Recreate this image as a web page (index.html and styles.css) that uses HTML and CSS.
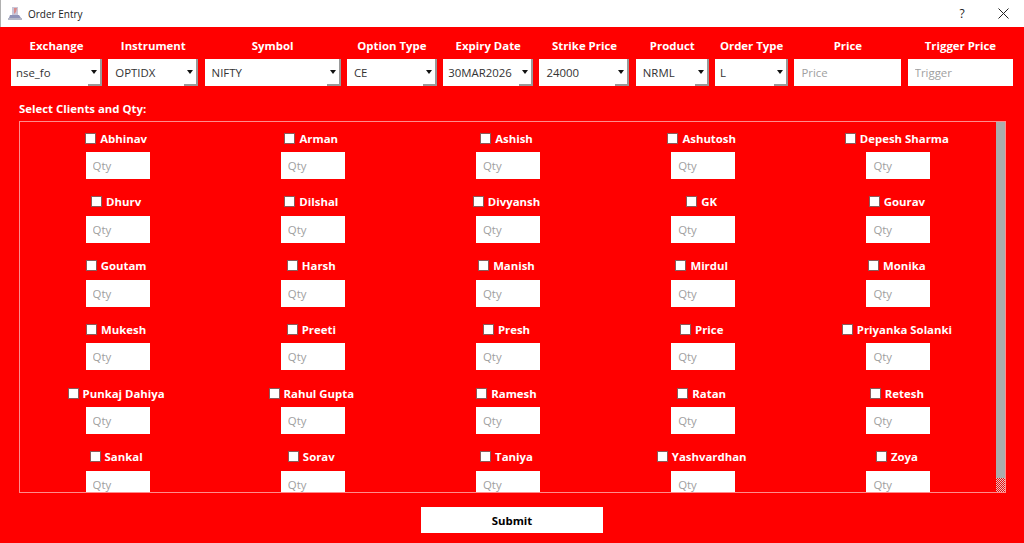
FILE: index.html
```html
<!DOCTYPE html>
<html lang="en">
<head>
    <meta charset="UTF-8">
    <meta name="viewport" content="width=device-width, initial-scale=1.0">
    <title>Order Entry</title>
    <link rel="stylesheet" href="styles.css">
</head>
<body>
    <!-- Window title bar -->
    <div class="title-bar">
        <svg class="app-icon" width="15" height="15" viewBox="0 0 15 15">
            <rect x="4" y="1" width="6" height="8" fill="#c9c6d8"/>
            <path d="M6 2 L9 2 L8 6 L6 8 Z" fill="#d98a8a"/>
            <path d="M2 9 L11 9 L13 12 L1 12 Z" fill="#8f93b8"/>
            <rect x="0" y="12" width="14" height="2" fill="#b4b8c8"/>
        </svg>
        <span class="title-text">Order Entry</span>
        <span class="help-button">?</span>
        <svg class="close-button" width="11" height="11" viewBox="0 0 11 11">
            <path d="M0.5 0.5 L10.5 10.5 M10.5 0.5 L0.5 10.5" stroke="#222" stroke-width="1" fill="none"/>
        </svg>
    </div>

    <div class="main">
        <!-- Order fields -->
        <div class="order-fields">
            <div class="field">
                <label>Exchange</label>
                <div class="combo combo-tight"><select><option>nse_fo</option></select></div>
            </div>
            <div class="field">
                <label>Instrument</label>
                <div class="combo"><select><option>OPTIDX</option></select></div>
            </div>
            <div class="field">
                <label>Symbol</label>
                <div class="combo"><select><option>NIFTY</option></select></div>
            </div>
            <div class="field">
                <label>Option Type</label>
                <div class="combo"><select><option>CE</option></select></div>
            </div>
            <div class="field">
                <label>Expiry Date</label>
                <div class="combo combo-tight"><select><option>30MAR2026</option></select></div>
            </div>
            <div class="field">
                <label>Strike Price</label>
                <div class="combo"><select><option>24000</option></select></div>
            </div>
            <div class="field">
                <label>Product</label>
                <div class="combo"><select><option>NRML</option></select></div>
            </div>
            <div class="field">
                <label>Order Type</label>
                <div class="combo combo-tight"><select><option>L</option></select></div>
            </div>
            <div class="field">
                <label>Price</label>
                <input class="text-input" type="text" placeholder="Price">
            </div>
            <div class="field">
                <label>Trigger Price</label>
                <input class="text-input" type="text" placeholder="Trigger">
            </div>
        </div>

        <div class="section-title">Select Clients and Qty:</div>

        <!-- Clients list -->
        <div class="clients-box">
            <div class="clients-grid">
                <div class="client"><label><input type="checkbox">Abhinav</label><input class="qty" type="text" placeholder="Qty"></div>
                <div class="client"><label><input type="checkbox">Arman</label><input class="qty" type="text" placeholder="Qty"></div>
                <div class="client"><label><input type="checkbox">Ashish</label><input class="qty" type="text" placeholder="Qty"></div>
                <div class="client"><label><input type="checkbox">Ashutosh</label><input class="qty" type="text" placeholder="Qty"></div>
                <div class="client"><label><input type="checkbox">Depesh Sharma</label><input class="qty" type="text" placeholder="Qty"></div>

                <div class="client"><label><input type="checkbox">Dhurv</label><input class="qty" type="text" placeholder="Qty"></div>
                <div class="client"><label><input type="checkbox">Dilshal</label><input class="qty" type="text" placeholder="Qty"></div>
                <div class="client"><label><input type="checkbox">Divyansh</label><input class="qty" type="text" placeholder="Qty"></div>
                <div class="client"><label><input type="checkbox">GK</label><input class="qty" type="text" placeholder="Qty"></div>
                <div class="client"><label><input type="checkbox">Gourav</label><input class="qty" type="text" placeholder="Qty"></div>

                <div class="client"><label><input type="checkbox">Goutam</label><input class="qty" type="text" placeholder="Qty"></div>
                <div class="client"><label><input type="checkbox">Harsh</label><input class="qty" type="text" placeholder="Qty"></div>
                <div class="client"><label><input type="checkbox">Manish</label><input class="qty" type="text" placeholder="Qty"></div>
                <div class="client"><label><input type="checkbox">Mirdul</label><input class="qty" type="text" placeholder="Qty"></div>
                <div class="client"><label><input type="checkbox">Monika</label><input class="qty" type="text" placeholder="Qty"></div>

                <div class="client"><label><input type="checkbox">Mukesh</label><input class="qty" type="text" placeholder="Qty"></div>
                <div class="client"><label><input type="checkbox">Preeti</label><input class="qty" type="text" placeholder="Qty"></div>
                <div class="client"><label><input type="checkbox">Presh</label><input class="qty" type="text" placeholder="Qty"></div>
                <div class="client"><label><input type="checkbox">Price</label><input class="qty" type="text" placeholder="Qty"></div>
                <div class="client"><label><input type="checkbox">Priyanka Solanki</label><input class="qty" type="text" placeholder="Qty"></div>

                <div class="client"><label><input type="checkbox">Punkaj Dahiya</label><input class="qty" type="text" placeholder="Qty"></div>
                <div class="client"><label><input type="checkbox">Rahul Gupta</label><input class="qty" type="text" placeholder="Qty"></div>
                <div class="client"><label><input type="checkbox">Ramesh</label><input class="qty" type="text" placeholder="Qty"></div>
                <div class="client"><label><input type="checkbox">Ratan</label><input class="qty" type="text" placeholder="Qty"></div>
                <div class="client"><label><input type="checkbox">Retesh</label><input class="qty" type="text" placeholder="Qty"></div>

                <div class="client"><label><input type="checkbox">Sankal</label><input class="qty" type="text" placeholder="Qty"></div>
                <div class="client"><label><input type="checkbox">Sorav</label><input class="qty" type="text" placeholder="Qty"></div>
                <div class="client"><label><input type="checkbox">Taniya</label><input class="qty" type="text" placeholder="Qty"></div>
                <div class="client"><label><input type="checkbox">Yashvardhan</label><input class="qty" type="text" placeholder="Qty"></div>
                <div class="client"><label><input type="checkbox">Zoya</label><input class="qty" type="text" placeholder="Qty"></div>
            </div>
            <div class="scrollbar"><div class="scrollbar-corner"></div></div>
        </div>

        <div class="submit-row">
            <button class="submit-button">Submit</button>
        </div>
    </div>
</body>
</html>
```

FILE: styles.css
```css
html, body {
    height: 100%;
}

body {
    margin: 0;
    width: 1024px;
    height: 543px;
    overflow: hidden;
    display: flex;
    flex-direction: column;
    background-color: #ff0000;
    font-family: "Open Sans", "Noto Sans", sans-serif;
    font-size: 11.4px;
}

.title-bar {
    height: 27px;
    flex: none;
    box-sizing: border-box;
    display: flex;
    align-items: center;
    padding-left: 7px;
    background-color: white;
    border-left: 1px solid #b0b0b0;
    color: #222;
}

.app-icon {
    margin-right: 5px;
}

.title-text {
    flex: 1;
    font-size: 10px;
}

.help-button {
    width: 12px;
    margin-right: 30px;
    text-align: center;
    font-size: 12px;
}

.close-button {
    margin-right: 15px;
}

.main {
    flex: 1;
    min-height: 0;
    display: flex;
    flex-direction: column;
    padding: 10px 11px 0 11px;
    color: white;
}

.order-fields {
    display: grid;
    grid-template-columns: 91px 90px 136px 90px 90px 90px 73px 73px 107px 105.5px;
    column-gap: 6.3px;
}

.field {
    display: flex;
    flex-direction: column;
    align-items: stretch;
    gap: 5px;
}

.field label {
    height: 17px;
    line-height: 17px;
    text-align: center;
    font-weight: 700;
    white-space: nowrap;
}

.combo {
    position: relative;
    height: 27px;
}

.combo select {
    width: 100%;
    height: 100%;
    padding: 0 0 0 7px;
    border: none;
    border-radius: 0;
    appearance: none;
    background-color: white;
    color: #333;
    font-family: inherit;
    font-size: 11.4px;
}

.combo-tight select {
    padding-left: 5px;
}

/* dropdown arrow */
.combo::before {
    content: "";
    position: absolute;
    top: 11px;
    right: 5px;
    border-left: 3.5px solid transparent;
    border-right: 3.5px solid transparent;
    border-top: 4px solid #111;
}

/* bevel on the bottom right corner */
.combo::after {
    content: "";
    position: absolute;
    right: 0;
    bottom: 0;
    width: 14px;
    height: 100%;
    box-sizing: border-box;
    border-right: 2px solid #999;
    border-bottom: 2px solid #999;
}

.text-input {
    height: 27px;
    box-sizing: border-box;
    width: 100%;
    padding: 0 0 0 7px;
    border: none;
    border-radius: 0;
    background-color: white;
    font-family: inherit;
    font-size: 11.4px;
}

.text-input::placeholder,
.qty::placeholder {
    color: #a0a0a0;
    opacity: 1;
}

.section-title {
    margin: 14px 0 4px 8px;
    height: 17px;
    line-height: 17px;
    font-weight: 700;
}

.clients-box {
    flex: none;
    display: flex;
    width: 987px;
    height: 372px;
    margin-left: 8px;
    box-sizing: border-box;
    border: 1px solid #ff8c8c;
    overflow: hidden;
}

.clients-grid {
    flex: 1;
    min-width: 0;
    display: grid;
    grid-template-columns: repeat(5, 1fr);
    grid-auto-rows: 49px;
    row-gap: 14.8px;
    padding-top: 8px;
}

.client {
    display: flex;
    flex-direction: column;
    align-items: center;
    gap: 6px;
}

.client label {
    height: 16px;
    margin-right: 3px;
    display: flex;
    align-items: center;
    gap: 4px;
    font-weight: 700;
    white-space: nowrap;
}

.client input[type="checkbox"] {
    width: 11px;
    height: 11px;
    margin: 0;
    appearance: none;
    background-color: white;
    border: 1px solid #8a5a5a;
}

.qty {
    width: 64px;
    height: 27px;
    flex: none;
    box-sizing: border-box;
    padding: 0 0 0 7px;
    border: none;
    border-radius: 0;
    background-color: white;
    font-family: inherit;
    font-size: 11.4px;
}

.scrollbar {
    width: 9px;
    flex: none;
    display: flex;
    align-items: flex-end;
    background-color: #ababab;
}

.scrollbar-corner {
    width: 100%;
    height: 14px;
    background-image: conic-gradient(#ff0000 25%, #d0d0d0 0 50%, #ff0000 0 75%, #d0d0d0 0);
    background-size: 2px 2px;
}

.submit-row {
    display: flex;
    justify-content: center;
    margin-top: 14px;
}

.submit-button {
    width: 182px;
    height: 26px;
    padding: 0;
    border: none;
    border-radius: 0;
    background-color: white;
    color: black;
    font-family: inherit;
    font-size: 11.4px;
    font-weight: 700;
}
```
